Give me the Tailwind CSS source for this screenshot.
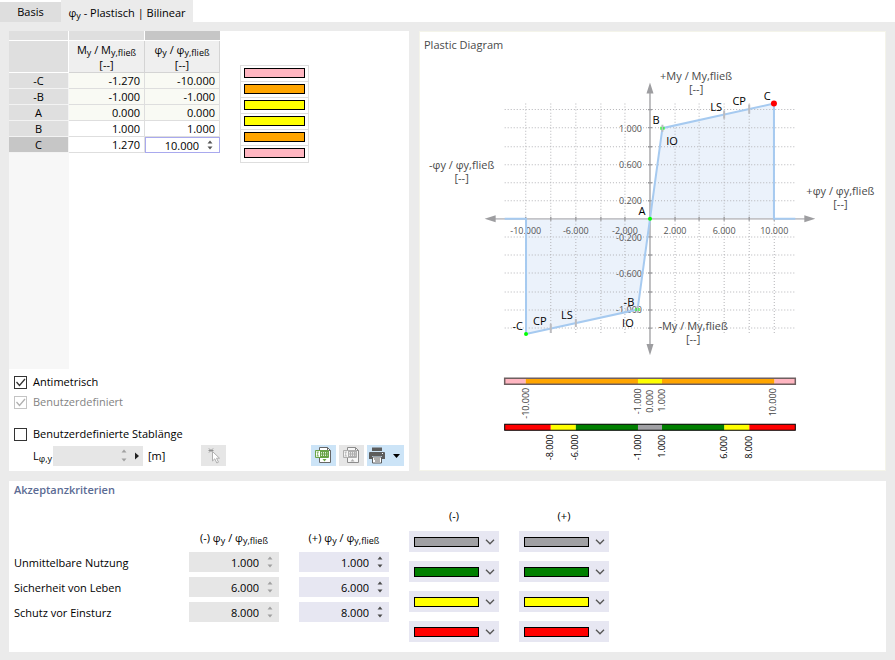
<!DOCTYPE html>
<html lang="de">

<head>
    <meta charset="UTF-8">
    <meta name="viewport" content="width=device-width, initial-scale=1.0">
    <title>Plastisch | Bilinear</title>
    <script src="https://cdn.jsdelivr.net/npm/@tailwindcss/browser@4"></script>
</head>
<body class="bg-[#ebebeb] min-h-screen flex flex-col font-['Open_Sans','Noto_Sans',sans-serif] text-[11px] leading-4 text-black">

    <!-- Shared icons -->
    <svg class="hidden">
        <symbol id="up" viewBox="0 0 6 4"><path d="M3 0.5L5.5 3.5H0.5z" fill="currentColor"/></symbol>
        <symbol id="down" viewBox="0 0 6 4"><path d="M3 3.5L5.5 0.5H0.5z" fill="currentColor"/></symbol>
        <symbol id="check" viewBox="0 0 13 13"><path d="M2.5 6L5.5 9.5L11 3" fill="none" stroke="currentColor" stroke-width="1.3"/></symbol>
        <symbol id="chevron" viewBox="0 0 10 6"><path d="M1 0.8L5 4.8L9 0.8" fill="none" stroke="currentColor" stroke-width="1.3"/></symbol>
        <symbol id="sheet" viewBox="0 0 17 17">
            <path d="M4.5 0.5H12.5L15.5 3.5V15.5H4.5z" fill="#fff" stroke="#666"/>
            <path d="M12.5 0.5V3.5H15.5" fill="none" stroke="#666"/>
            <path d="M0.5 3.5H13.5V10.5H0.5z" fill="#fff" stroke="currentColor"/>
            <path d="M5 4H13V10H5z" fill="currentColor"/>
            <path d="M6 5.5H12.5M6 7H12.5M6 8.5H12.5" stroke="#fff" stroke-width="0.8" stroke-dasharray="1 1"/>
            <path d="M1.5 5H4M1.5 9H4M2.7 5V9" stroke="currentColor" stroke-width="0.8"/>
        </symbol>
    </svg>

    <!-- Tabs -->
    <nav class="bg-white h-[22px] flex items-end">
        <button class="bg-[#dedede] h-5 w-[61px] text-center">Basis</button>
        <button class="bg-[#ebebeb] h-[22px] w-[132px] text-center pt-1">φ<sub class="text-[9px]">y</sub> - Plastisch | Bilinear</button>
    </nav>

    <main class="flex-1 flex flex-col gap-[10px] px-[9px] pt-[9px] pb-2">
        <div class="flex-1 flex gap-[10px]">

            <!-- Values -->
            <section class="bg-white w-[400px] shrink-0 flex flex-col">
                <div class="flex-1 flex items-start relative">
                    <div class="self-stretch bg-[#f7f7f7]">
                        <table class="table-fixed border-separate border-spacing-0 w-[211px] -mr-[151px]">
                            <colgroup><col class="w-[60px]"><col class="w-[76px]"><col class="w-[75px]"></colgroup>
                            <thead>
                                <tr class="h-[10px]">
                                    <td class="bg-[#dfdfdf] border-b border-r border-white"></td>
                                    <td class="bg-[#dfdfdf] border-b border-r border-white"></td>
                                    <td class="bg-[#c6c6c6] border-b border-white"></td>
                                </tr>
                                <tr class="h-8 leading-[15px]">
                                    <td class="bg-[#dfdfdf] border-b border-r border-white"></td>
                                    <th class="bg-[#efefef] border-b border-r border-[#d4d4d4] font-normal p-0">M<sub class="text-[9px]">y</sub> / M<sub class="text-[9px]">y,fließ</sub><br>[--]</th>
                                    <th class="bg-[#efefef] border-b border-r border-[#d4d4d4] font-normal p-0">φ<sub class="text-[9px]">y</sub> / φ<sub class="text-[9px]">y,fließ</sub><br>[--]</th>
                                </tr>
                            </thead>
                            <tbody class="text-right">
                                <tr class="h-4 leading-[15px]">
                                    <th class="bg-[#dfdfdf] border-b border-r border-[#f3f3f3] font-normal text-center p-0">-C</th>
                                    <td class="bg-[#f9faf4] border-b border-r border-[#dedede] py-0 pr-1">-1.270</td>
                                    <td class="bg-[#f9faf4] border-b border-r border-[#dedede] py-0 pr-1">-10.000</td>
                                </tr>
                                <tr class="h-4 leading-[15px]">
                                    <th class="bg-[#dfdfdf] border-b border-r border-[#f3f3f3] font-normal text-center p-0">-B</th>
                                    <td class="bg-[#f9faf4] border-b border-r border-[#dedede] py-0 pr-1">-1.000</td>
                                    <td class="bg-[#f9faf4] border-b border-r border-[#dedede] py-0 pr-1">-1.000</td>
                                </tr>
                                <tr class="h-4 leading-[15px]">
                                    <th class="bg-[#dfdfdf] border-b border-r border-[#f3f3f3] font-normal text-center p-0">A</th>
                                    <td class="bg-[#f9faf4] border-b border-r border-[#dedede] py-0 pr-1">0.000</td>
                                    <td class="bg-[#f9faf4] border-b border-r border-[#dedede] py-0 pr-1">0.000</td>
                                </tr>
                                <tr class="h-4 leading-[15px]">
                                    <th class="bg-[#dfdfdf] border-b border-r border-[#f3f3f3] font-normal text-center p-0">B</th>
                                    <td class="bg-white border-b border-r border-[#dedede] py-0 pr-1">1.000</td>
                                    <td class="bg-white border-b border-r border-[#dedede] py-0 pr-1">1.000</td>
                                </tr>
                                <tr class="h-4 leading-[15px]">
                                    <th class="bg-[#c6c6c6] border-b border-r border-[#f3f3f3] font-normal text-center p-0">C</th>
                                    <td class="bg-white border-b border-r border-[#dedede] py-0 pr-1">1.270</td>
                                    <td class="bg-white p-0">
                                        <div class="h-4 border border-[#a9a9ee] flex items-center pr-[6px]">
                                            <input class="w-full min-w-0 text-right outline-none pr-2" type="text" value="10.000" aria-label="φy C">
                                            <span class="flex flex-col gap-[2px] text-[#555]">
                                                <button class="block" aria-label="Erhöhen"><svg class="w-[6px] h-1"><use href="#up"/></svg></button>
                                                <button class="block" aria-label="Verringern"><svg class="w-[6px] h-1"><use href="#down"/></svg></button>
                                            </span>
                                        </div>
                                    </td>
                                </tr>
                            </tbody>
                        </table>
                    </div>

                    <!-- Colour legend of the rows -->
                    <div class="ml-[171px] mt-[34px] w-[69px] border border-[#dedede] divide-y divide-[#dedede]">
                        <div class="h-4 px-[3px] pt-[2px]"><div class="h-[10px] w-[61px] border border-black bg-[#ffb6c1]"></div></div>
                        <div class="h-4 px-[3px] pt-[2px]"><div class="h-[10px] w-[61px] border border-black bg-[#ffa500]"></div></div>
                        <div class="h-4 px-[3px] pt-[2px]"><div class="h-[10px] w-[61px] border border-black bg-[#ffff00]"></div></div>
                        <div class="h-4 px-[3px] pt-[2px]"><div class="h-[10px] w-[61px] border border-black bg-[#ffff00]"></div></div>
                        <div class="h-4 px-[3px] pt-[2px]"><div class="h-[10px] w-[61px] border border-black bg-[#ffa500]"></div></div>
                        <div class="h-4 px-[3px] pt-[2px]"><div class="h-[10px] w-[61px] border border-black bg-[#ffb6c1]"></div></div>
                    </div>
                </div>

                <!-- Options -->
                <div class="px-[5px] pt-[3px] pb-1">
                    <label class="h-5 flex items-center gap-[6px]">
                        <span class="grid">
                            <input type="checkbox" checked class="peer appearance-none w-[13px] h-[13px] border border-[#333] bg-white col-start-1 row-start-1">
                            <svg class="hidden peer-checked:block w-[13px] h-[13px] col-start-1 row-start-1 pointer-events-none text-[#333]"><use href="#check"/></svg>
                        </span>
                        Antimetrisch
                    </label>
                    <label class="h-5 flex items-center gap-[6px] text-[#838383]">
                        <span class="grid">
                            <input type="checkbox" checked disabled class="peer appearance-none w-[13px] h-[13px] border border-[#c4c4c4] bg-white col-start-1 row-start-1">
                            <svg class="hidden peer-checked:block w-[13px] h-[13px] col-start-1 row-start-1 pointer-events-none text-[#b0b0b0]"><use href="#check"/></svg>
                        </span>
                        Benutzerdefiniert
                    </label>
                    <label class="h-5 mt-3 flex items-center gap-[6px]">
                        <span class="grid">
                            <input type="checkbox" class="peer appearance-none w-[13px] h-[13px] border border-[#333] bg-white col-start-1 row-start-1">
                            <svg class="hidden peer-checked:block w-[13px] h-[13px] col-start-1 row-start-1 pointer-events-none text-[#333]"><use href="#check"/></svg>
                        </span>
                        Benutzerdefinierte Stablänge
                    </label>
                    <div class="flex items-center mt-[1px] mb-[1px] h-[21px]">
                        <label for="length" class="w-5 ml-[19px]">L<sub class="text-[9px]">φ,y</sub></label>
                        <div class="bg-[#e6e6e6] h-5 w-[90px] flex items-center gap-2 pr-1">
                            <input id="length" type="text" disabled class="flex-1 min-w-0">
                            <span class="flex flex-col gap-[5px] text-[#a0a0a0]">
                                <svg class="w-[6px] h-1"><use href="#up"/></svg>
                                <svg class="w-[6px] h-1"><use href="#down"/></svg>
                            </span>
                            <button aria-label="Mehr"><svg class="w-1 h-2" viewBox="0 0 4 8"><path d="M0 0.5L4 4L0 7.5z" fill="#222"/></svg></button>
                        </div>
                        <span class="ml-[5px]">[m]</span>
                        <button disabled class="ml-auto mr-[85px] bg-[#e6e6e6] w-[25px] h-[21px] grid place-items-center" aria-label="Auswählen">
                            <svg class="w-4 h-4" viewBox="0 0 16 16" fill="none">
                                <path d="M3 0.5L7 4.5M7 0.5L3 4.5M2.5 2.5H7.5" stroke="#909090"/>
                                <path d="M6.5 3.5V13L8.8 10.8L10.8 15L12.5 14.2L10.5 10.2H13.5z" fill="#fff" stroke="#b0b0b0"/>
                            </svg>
                        </button>
                        <div class="flex gap-[3px]">
                            <button class="bg-[#cce4f7] w-[25px] h-[21px] grid place-items-center text-[#69a345]" aria-label="Exportieren">
                                <svg class="w-[17px] h-[17px]" viewBox="0 0 17 17"><use href="#sheet"/><path d="M7.5 12H11.5L9.5 14.5z" fill="currentColor"/></svg>
                            </button>
                            <button disabled class="bg-[#e6e6e6] w-[25px] h-[21px] grid place-items-center text-[#999]" aria-label="Importieren">
                                <svg class="w-[17px] h-[17px] opacity-70" viewBox="0 0 17 17"><use href="#sheet"/><path d="M7.5 14.5H11.5L9.5 12z" fill="currentColor"/></svg>
                            </button>
                            <button class="bg-[#cce4f7] w-[37px] h-[21px] flex items-center gap-2 pl-[2px]" aria-label="Drucken">
                                <svg class="w-4 h-[17px]" viewBox="0 0 16 17">
                                    <path d="M3 0.5H13V4H3zM1 5H15Q16 5 16 6V12H13V9H3V12H0V6Q0 5 1 5z" fill="#5c5c5c"/>
                                    <path d="M3.5 10H12.5V16H3.5z" fill="#fff" stroke="#5c5c5c"/>
                                    <path d="M5 12H11M6 14H11" stroke="#5c5c5c"/>
                                    <path d="M13 6.5H14" stroke="#fff"/>
                                </svg>
                                <svg class="w-[7px] h-1" viewBox="0 0 7 4"><path d="M0 0H7L3.5 4z" fill="#000"/></svg>
                            </button>
                        </div>
                    </div>
                </div>
            </section>

            <!-- Diagram -->
            <section class="bg-white flex-1 min-w-0 border border-[#f4f4ea]">
                <h2 class="text-[#4a4a4a] pl-1 pt-[5px]">Plastic Diagram</h2>
                <svg class="w-full" viewBox="-229 -165 464 414" font-size="11" role="img" aria-label="Plastic Diagram">
                    <g transform="translate(0.5 0.5)">
                        <!-- Hinge curve area -->
                        <path d="M0 0L12.4 -90.5L123.7 -115V0z" fill="#ebf2fb"/>
                        <path d="M0 0L-12.4 90.5L-123.7 115V0z" fill="#ebf2fb"/>

                        <!-- Grid -->
                        <g stroke="#b4b4b8" stroke-dasharray="1 2" fill="none">
                            <path d="M-145 -109H145M-145 -91H145M-145 -72H145M-145 -54H145M-145 -36H145M-145 -18H145M-145 18H145M-145 36H145M-145 54H145M-145 73H145M-145 91H145M-145 109H145"/>
                            <path d="M-124 -115V115M-99 -115V115M-74 -115V115M-49 -115V115M-25 -115V115M25 -115V115M49 -115V115M74 -115V115M99 -115V115M124 -115V115"/>
                        </g>

                        <!-- Axis values -->
                        <g font-size="9" fill="#555" text-anchor="middle">
                            <text x="-124" y="15">-10.000</text>
                            <text x="-74" y="15">-6.000</text>
                            <text x="-25" y="15">-2.000</text>
                            <text x="25" y="15">2.000</text>
                            <text x="74" y="15">6.000</text>
                            <text x="124" y="15">10.000</text>
                        </g>
                        <g font-size="9" fill="#555" text-anchor="end">
                            <text x="-8" y="-87">1.000</text>
                            <text x="-8" y="-51">0.600</text>
                            <text x="-8" y="-15">0.200</text>
                            <text x="-8" y="22">-0.200</text>
                            <text x="-8" y="58">-0.600</text>
                            <text x="-8" y="94">-1.000</text>
                        </g>

                        <!-- Axes -->
                        <path d="M-155 0H155" stroke="#c4c4c8" stroke-width="1.6"/>
                        <path d="M0 -127V127" stroke="#9d9da0" stroke-width="1.3"/>
                        <path d="M-124 -2V2M-99 -2V2M-74 -2V2M-49 -2V2M-25 -2V2M25 -2V2M49 -2V2M74 -2V2M99 -2V2M124 -2V2" stroke="#9d9da0" stroke-width="1.4"/>
                        <path d="M-2 -109H2M-2 -91H2M-2 -72H2M-2 -54H2M-2 -36H2M-2 -18H2M-2 18H2M-2 36H2M-2 54H2M-2 73H2M-2 91H2M-2 109H2" stroke="#9d9da0" stroke-width="1.4"/>
                        <path d="M0 -136L3.5 -125H-3.5zM0 136L3.5 125H-3.5zM-165 0L-154 -3.5V3.5zM165 0L154 -3.5V3.5z" fill="#9d9da0"/>

                        <!-- Hinge curve -->
                        <path d="M-145 0H-123.7V115L-12.4 90.5L12.4 -90.5L123.7 -115V0H145" fill="none" stroke="#a6caf0" stroke-width="2"/>
                        <path d="M12.4 -94V-87M74 -108V-100M99 -114V-105M-12.4 94V87M-74 108V100M-99 114V105" stroke="#bcbcc0" stroke-width="2"/>
                        <g fill="#00ff00">
                            <circle cx="0" cy="0" r="2"/>
                            <circle cx="-123.7" cy="115" r="2"/>
                            <path d="M10.4 -92H11.4V-89H10.4zM13.4 -92H14.4V-89H13.4zM-14.4 89H-13.4V92H-14.4zM-11.4 89H-10.4V92H-11.4z"/>
                        </g>
                        <circle cx="123.7" cy="-115" r="3" fill="#ff0000"/>

                        <!-- Point names -->
                        <g text-anchor="middle">
                            <text x="6" y="-95">B</text>
                            <text x="22" y="-74">IO</text>
                            <text x="66" y="-108">LS</text>
                            <text x="89" y="-114">CP</text>
                            <text x="117" y="-119">C</text>
                            <text x="-8" y="-4">A</text>
                            <text x="-21" y="87">-B</text>
                            <text x="-22" y="108">IO</text>
                            <text x="-83" y="100">LS</text>
                            <text x="-110" y="106">CP</text>
                            <text x="-132" y="111">-C</text>
                        </g>

                        <!-- Axis titles -->
                        <g fill="#4a4a4a" text-anchor="middle">
                            <text x="46" y="-139">+My / My,fließ</text>
                            <text x="46" y="-126">[--]</text>
                            <text x="43" y="111">-My / My,fließ</text>
                            <text x="43" y="124">[--]</text>
                            <text x="-188" y="-50">-φy / φy,fließ</text>
                            <text x="-188" y="-37">[--]</text>
                            <text x="190" y="-24">+φy / φy,fließ</text>
                            <text x="190" y="-11">[--]</text>
                        </g>

                        <!-- Hinge state bar -->
                        <path d="M-145 159H-124V165H-145zM124 159H145V165H124z" fill="#ffb6c1"/>
                        <path d="M-124 159H-12V165H-124zM12 159H124V165H12z" fill="#ffa500"/>
                        <path d="M-12 159H12V165H-12z" fill="#ffff00"/>
                        <path d="M-145 159H145V165H-145z" fill="none" stroke="#6e5f60" stroke-width="1.5"/>
                        <g font-size="9" fill="#444" text-anchor="middle">
                            <text transform="translate(-121 184) rotate(-90)">-10.000</text>
                            <text transform="translate(-9 182) rotate(-90)">-1.000</text>
                            <text transform="translate(3 182) rotate(-90)">0.000</text>
                            <text transform="translate(15 181) rotate(-90)">1.000</text>
                            <text transform="translate(126 183) rotate(-90)">10.000</text>
                        </g>

                        <!-- Acceptance bar -->
                        <path d="M-145 205H-99V211H-145zM99 205H145V211H99z" fill="#ff0000"/>
                        <path d="M-99 205H-74V211H-99zM74 205H99V211H74z" fill="#ffff00"/>
                        <path d="M-74 205H-12V211H-74zM12 205H74V211H12z" fill="#008000"/>
                        <path d="M-12 205H12V211H-12z" fill="#a0a0a4"/>
                        <path d="M-145 205H145V211H-145z" fill="none" stroke="#000"/>
                        <g font-size="9" text-anchor="middle">
                            <text transform="translate(-97 228) rotate(-90)">-8.000</text>
                            <text transform="translate(-72 228) rotate(-90)">-6.000</text>
                            <text transform="translate(-9 228) rotate(-90)">-1.000</text>
                            <text transform="translate(15 227) rotate(-90)">1.000</text>
                            <text transform="translate(77 228) rotate(-90)">6.000</text>
                            <text transform="translate(102 228) rotate(-90)">8.000</text>
                        </g>
                    </g>
                </svg>
            </section>
        </div>

        <!-- Acceptance criteria -->
        <section class="bg-white px-[5px] pt-[1px] pb-[10px]">
            <h2 class="font-semibold text-[#5b6b94]">Akzeptanzkriterien</h2>
            <div class="flex gap-5 mt-[10px]">
                <div class="grid grid-cols-[155px_90px_90px] gap-x-5 gap-y-[5px] mt-[22px] content-start items-center">
                    <span></span>
                    <span class="text-center pb-[1px]">(-) φ<sub class="text-[9px]">y</sub> / φ<sub class="text-[9px]">y,fließ</sub></span>
                    <span class="text-center pb-[1px]">(+) φ<sub class="text-[9px]">y</sub> / φ<sub class="text-[9px]">y,fließ</sub></span>

                    <label for="io" class="pt-[1px]">Unmittelbare Nutzung</label>
                    <div class="bg-[#e6e6e6] h-5 flex items-center pr-[6px]">
                        <input class="w-full min-w-0 text-right pr-2 pt-[1px]" type="text" value="1.000" disabled aria-label="Unmittelbare Nutzung (-)">
                        <span class="flex flex-col gap-1 text-[#a0a0a0]">
                            <svg class="w-[6px] h-1"><use href="#up"/></svg>
                            <svg class="w-[6px] h-1"><use href="#down"/></svg>
                        </span>
                    </div>
                    <div class="bg-[#e7e7f2] h-5 flex items-center pr-[6px]">
                        <input id="io" class="w-full min-w-0 text-right pr-2 pt-[1px]" type="text" value="1.000">
                        <span class="flex flex-col gap-1 text-[#4a4a4a]">
                            <button class="block" aria-label="Erhöhen"><svg class="w-[6px] h-1"><use href="#up"/></svg></button>
                            <button class="block" aria-label="Verringern"><svg class="w-[6px] h-1"><use href="#down"/></svg></button>
                        </span>
                    </div>

                    <label for="ls" class="pt-[1px]">Sicherheit von Leben</label>
                    <div class="bg-[#e6e6e6] h-5 flex items-center pr-[6px]">
                        <input class="w-full min-w-0 text-right pr-2 pt-[1px]" type="text" value="6.000" disabled aria-label="Sicherheit von Leben (-)">
                        <span class="flex flex-col gap-1 text-[#a0a0a0]">
                            <svg class="w-[6px] h-1"><use href="#up"/></svg>
                            <svg class="w-[6px] h-1"><use href="#down"/></svg>
                        </span>
                    </div>
                    <div class="bg-[#e7e7f2] h-5 flex items-center pr-[6px]">
                        <input id="ls" class="w-full min-w-0 text-right pr-2 pt-[1px]" type="text" value="6.000">
                        <span class="flex flex-col gap-1 text-[#4a4a4a]">
                            <button class="block" aria-label="Erhöhen"><svg class="w-[6px] h-1"><use href="#up"/></svg></button>
                            <button class="block" aria-label="Verringern"><svg class="w-[6px] h-1"><use href="#down"/></svg></button>
                        </span>
                    </div>

                    <label for="cp" class="pt-[1px]">Schutz vor Einsturz</label>
                    <div class="bg-[#e6e6e6] h-5 flex items-center pr-[6px]">
                        <input class="w-full min-w-0 text-right pr-2 pt-[1px]" type="text" value="8.000" disabled aria-label="Schutz vor Einsturz (-)">
                        <span class="flex flex-col gap-1 text-[#a0a0a0]">
                            <svg class="w-[6px] h-1"><use href="#up"/></svg>
                            <svg class="w-[6px] h-1"><use href="#down"/></svg>
                        </span>
                    </div>
                    <div class="bg-[#e7e7f2] h-5 flex items-center pr-[6px]">
                        <input id="cp" class="w-full min-w-0 text-right pr-2 pt-[1px]" type="text" value="8.000">
                        <span class="flex flex-col gap-1 text-[#4a4a4a]">
                            <button class="block" aria-label="Erhöhen"><svg class="w-[6px] h-1"><use href="#up"/></svg></button>
                            <button class="block" aria-label="Verringern"><svg class="w-[6px] h-1"><use href="#down"/></svg></button>
                        </span>
                    </div>
                </div>

                <!-- Colour pickers, filled by the script below -->
                <div class="w-[90px]">
                    <div class="text-center mb-[7px]">(-)</div>
                    <div class="colors flex flex-col gap-[9px]" data-side="(-)"></div>
                </div>
                <div class="w-[90px]">
                    <div class="text-center mb-[7px]">(+)</div>
                    <div class="colors flex flex-col gap-[9px]" data-side="(+)"></div>
                </div>
            </div>
        </section>
    </main>

    <script>
        const colors = [
            { name: 'Grau', bg: 'bg-[#a0a0a4]' },
            { name: 'Grün', bg: 'bg-[#008000]' },
            { name: 'Gelb', bg: 'bg-[#ffff00]' },
            { name: 'Rot', bg: 'bg-[#ff0000]' }
        ];

        document.querySelectorAll('.colors').forEach(list => {
            list.innerHTML = colors.map((color, index) => `
                <div class="grid h-[21px] bg-[#e7e7f2]">
                    <select class="appearance-none text-transparent w-full h-[21px] outline-none col-start-1 row-start-1" aria-label="Farbe ${index + 1} ${list.dataset.side}">
                        <option>${color.name}</option>
                    </select>
                    <div class="flex items-center justify-between pl-[5px] pr-1 col-start-1 row-start-1 pointer-events-none">
                        <span class="w-[65px] h-[10px] border border-black ${color.bg}"></span>
                        <svg class="w-[10px] h-[6px] text-[#555]"><use href="#chevron"/></svg>
                    </div>
                </div>
            `).join('');
        });
    </script>
</body>
</html>
